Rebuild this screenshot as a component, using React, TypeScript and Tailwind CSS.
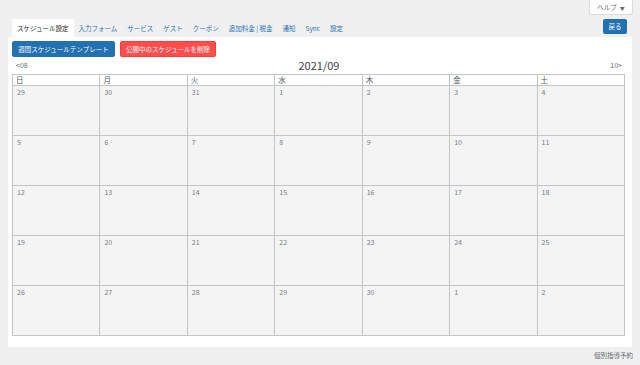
import { useState } from 'react';

const tabs = ['スケジュール設定', '入力フォーム', 'サービス', 'ゲスト', 'クーポン', '追加料金 | 税金', '通知', 'Sync', '設定'];
const weekdays = ['日', '月', '火', '水', '木', '金', '土'];
const days = [
  29, 30, 31, 1, 2, 3, 4,
  5, 6, 7, 8, 9, 10, 11,
  12, 13, 14, 15, 16, 17, 18,
  19, 20, 21, 22, 23, 24, 25,
  26, 27, 28, 29, 30, 1, 2,
];

export default function App() {
  const [active, setActive] = useState(0);

  return (
    <div
      className="relative w-[640px] h-[365px] bg-[#f0f0f1] overflow-hidden"
      style={{ fontFamily: '"Noto Sans CJK JP", "Noto Sans", "Liberation Sans", sans-serif' }}
    >
      {/* help tab */}
      <div className="flex justify-end pr-[7px]">
        <button className="h-[15px] w-[44px] bg-white border border-t-0 border-[#dcdcde] rounded-b-[3px] text-[6.5px] text-[#646970] flex items-center justify-center gap-[3px] leading-none">
          ヘルプ <span className="text-[5px]">▼</span>
        </button>
      </div>

      <div className="px-[8px] pt-[4px]">
        {/* tabs */}
        <div className="flex items-end justify-between h-[18px]">
          <div className="flex items-end h-full pl-[4px]">
            {tabs.map((t, i) => (
              <button
                key={t}
                onClick={() => setActive(i)}
                className={`h-full px-[5px] text-[6.5px] leading-none whitespace-nowrap ${
                  i === active ? 'bg-white text-[#1d2327]' : 'text-[#2271b1]'
                }`}
              >
                {t}
              </button>
            ))}
          </div>
          <button className="mb-[3px] mr-[5px] h-[15px] w-[24px] bg-[#2271b1] text-white text-[6.5px] rounded-[2px] leading-none">
            戻る
          </button>
        </div>

        {/* card */}
        <div className="bg-white h-[310px] pl-[4px] pt-[4px]">
          <div className="flex gap-[5px]">
            <button className="h-[16px] w-[103px] bg-[#2271b1] border border-[#2271b1] rounded-[2px] text-white text-[6.5px] leading-none">
              週間スケジュールテンプレート
            </button>
            <button className="h-[16px] w-[96px] bg-[#ff4d4d] border border-[#ff3b3b] rounded-[2px] text-white text-[6.5px] leading-none">
              公開中のスケジュールを削除
            </button>
          </div>

          <div className="w-[612px] h-[17px] flex items-center justify-between pl-[4px] pr-[2px]">
            <span className="text-[7px] text-[#646970] w-[30px]">&lt;08</span>
            <span className="text-[11px] text-[#3c434a] leading-none">2021/09</span>
            <span className="text-[7px] text-[#646970] w-[30px] text-right">10&gt;</span>
          </div>

          <div className="w-[613px] grid grid-cols-7 border-l border-t border-[#c3c4c7]">
            {weekdays.map((w) => (
              <div key={w} className="h-[11px] bg-white border-r border-b border-[#c3c4c7] pl-[3px] text-[7.5px] leading-[10px] text-[#50575e]">
                {w}
              </div>
            ))}
            {days.map((d, i) => (
              <div key={i} className="h-[50px] bg-[#f4f4f4] border-r border-b border-[#c3c4c7] pl-[4px] pt-[3px] text-[7px] leading-none text-[#787c82]">
                {d}
              </div>
            ))}
          </div>
        </div>
      </div>

      <div className="flex justify-end pr-[7px] pt-[4px] text-[6.5px] text-[#646970]">個別指導予約</div>
    </div>
  );
}
